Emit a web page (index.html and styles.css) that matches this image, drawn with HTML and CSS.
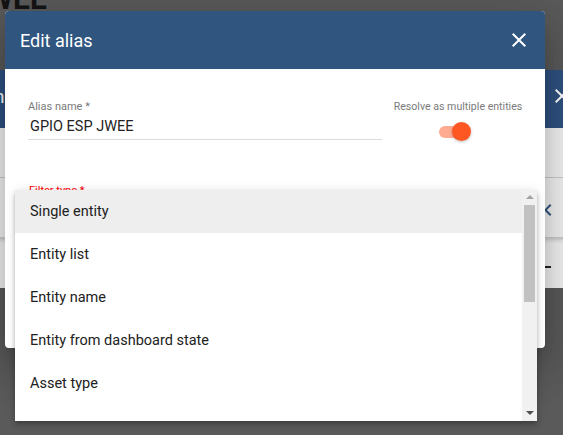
FILE: index.html
```html
<!DOCTYPE html>
<html lang="en">
<head>
<meta charset="utf-8">
<title>Edit alias</title>
<link rel="stylesheet" href="styles.css">
</head>
<body>
<div class="page">
  <div class="page-title">JWEE</div>

  <div class="under-dialog">
    <div class="under-header">
      <span class="under-title">n</span>
      <svg class="under-close" viewBox="0 0 24 24" width="24" height="24"><path d="M19 6.41 17.59 5 12 10.59 6.41 5 5 6.41 10.59 12 5 17.59 6.41 19 12 13.41 17.59 19 19 17.59 13.41 12z" fill="#fff"/></svg>
    </div>
    <div class="under-top"></div>
    <div class="under-toolbar">
      <svg class="under-chevron" viewBox="0 0 24 24" width="24" height="24"><path d="M15.41 7.41 14 6l-6 6 6 6 1.41-1.41L10.83 12z" fill="#305680"/></svg>
    </div>
    <div class="under-bottom"><span class="under-dash"></span></div>
  </div>

  <div class="dialog">
    <div class="dialog-header">
      <h2 class="dialog-title">Edit alias</h2>
      <svg class="close-icon" viewBox="0 0 24 24" width="24" height="24"><path d="M19 6.41 17.59 5 12 10.59 6.41 5 5 6.41 10.59 12 5 17.59 6.41 19 12 13.41 17.59 19 19 17.59 13.41 12z" fill="#fff"/></svg>
    </div>
    <div class="dialog-body">
      <div class="row">
        <div class="field">
          <label class="field-label">Alias name *</label>
          <div class="field-value">GPIO ESP JWEE</div>
        </div>
        <div class="resolve">
          <div class="resolve-label">Resolve as multiple entities</div>
          <div class="toggle"><span class="toggle-track"></span><span class="toggle-thumb"></span></div>
        </div>
      </div>
      <div class="filter-label">Filter type *</div>
    </div>
  </div>

  <div class="menu">
    <div class="menu-list">
      <div class="option active">Single entity</div>
      <div class="option">Entity list</div>
      <div class="option">Entity name</div>
      <div class="option">Entity from dashboard state</div>
      <div class="option">Asset type</div>
    </div>
    <div class="scrollbar">
      <span class="arrow-up"></span>
      <span class="thumb"></span>
      <span class="arrow-down"></span>
    </div>
  </div>
</div>
</body>
</html>
```

FILE: styles.css
```css
* { box-sizing: border-box; }
html, body { margin: 0; padding: 0; }
body {
  width: 563px;
  height: 435px;
  overflow: hidden;
  font-family: Roboto, "Liberation Sans", sans-serif;
  background: #5a5a5a;
}
.page { position: relative; width: 563px; height: 435px; overflow: hidden; }

.page-title {
  position: absolute;
  left: -30px;
  top: -19px;
  font-size: 30px;
  font-weight: 700;
  color: #141414;
}

/* dialog underneath */
.under-dialog {
  position: absolute;
  left: -20px;
  right: -20px;
  top: 70px;
  height: 218px;
  display: flex;
  flex-direction: column;
  background: #f4f4f4;
}
.under-header {
  height: 58px;
  background: #2f5281;
  display: flex;
  align-items: center;
  justify-content: space-between;
  padding: 0 9px 6px 14px;
}
.under-title { color: #fff; font-size: 19px; }
.under-top { height: 50px; border-bottom: 1px solid #cfcfcf; }
.under-toolbar {
  height: 59px;
  display: flex;
  align-items: center;
  justify-content: flex-end;
  padding: 4px 23px 0 0;
  box-shadow: 0 3px 4px rgba(0,0,0,.18);
  position: relative;
}
.under-bottom {
  flex: 1;
  display: flex;
  align-items: center;
  justify-content: flex-end;
  padding: 9px 32px 0 0;
}
.under-dash { width: 7px; height: 2px; background: #222; }

/* main dialog */
.dialog {
  position: absolute;
  left: 5px;
  top: 11px;
  width: 540px;
  height: 337px;
  background: #fff;
  border-radius: 4px;
  overflow: hidden;
  display: flex;
  flex-direction: column;
  box-shadow: 0 11px 15px -7px rgba(0,0,0,.2), 0 24px 38px 3px rgba(0,0,0,.14), 0 9px 46px 8px rgba(0,0,0,.12);
}
.dialog-header {
  height: 58px;
  flex: none;
  background: #305680;
  display: flex;
  align-items: center;
  padding: 0 14px 0 15px;
}
.dialog-title {
  flex: 1;
  margin: 0;
  font-size: 18px;
  font-weight: 400;
  color: #fff;
}
.close-icon { display: block; }

.dialog-body { padding: 31px 22px 0 23px; }
.row { display: flex; justify-content: space-between; }
.field { width: 354px; border-bottom: 1px solid #dcdcdc; height: 40px; }
.field-label { display: block; font-size: 11px; line-height: 13px; color: #7a7a7a; }
.field-value { font-size: 14.5px; line-height: 17px; margin-top: 5px; color: #222; padding-left: 2px; }

.resolve { display: flex; flex-direction: column; align-items: center; width: 130px; }
.resolve-label { font-size: 10.6px; line-height: 13px; color: #7a7a7a; white-space: nowrap; }
.toggle { position: relative; width: 32px; height: 20px; margin: 9px 6px 0 0; }
.toggle-track {
  position: absolute; left: 0; top: 4px;
  width: 30px; height: 12px; border-radius: 6px;
  background: #ffab91;
}
.toggle-thumb {
  position: absolute; left: 13px; top: 0;
  width: 19px; height: 19px; border-radius: 50%;
  background: #ff5722;
  box-shadow: 0 1px 3px rgba(0,0,0,.25);
}

.filter-label { margin-top: 42px; padding-left: 1px; font-size: 11px; line-height: 13px; color: #f00; }

/* dropdown panel */
.menu {
  position: absolute;
  left: 15px;
  top: 190px;
  width: 522px;
  height: 231px;
  background: #fff;
  display: flex;
  box-shadow: 0 2px 4px -1px rgba(0,0,0,.2), 0 4px 5px 0 rgba(0,0,0,.14), 0 1px 10px 0 rgba(0,0,0,.12);
  overflow: hidden;
}
.menu-list { flex: 1; }
.option {
  height: 43px;
  display: flex;
  align-items: center;
  padding-left: 15px;
  font-size: 14.5px;
  color: #212121;
}
.option.active { background: #eeeeee; }

.scrollbar {
  width: 15px;
  background: #f1f1f1;
  display: flex;
  flex-direction: column;
  align-items: center;
  position: relative;
}
.arrow-up {
  margin-top: 5px;
  width: 0; height: 0;
  border-left: 4px solid transparent;
  border-right: 4px solid transparent;
  border-bottom: 4px solid #a3a3a3;
}
.thumb { margin-top: 6px; width: 11px; height: 97px; background: #c1c1c1; }
.arrow-down {
  margin-top: auto;
  margin-bottom: 6px;
  width: 0; height: 0;
  border-left: 4px solid transparent;
  border-right: 4px solid transparent;
  border-top: 4px solid #505050;
}
```
